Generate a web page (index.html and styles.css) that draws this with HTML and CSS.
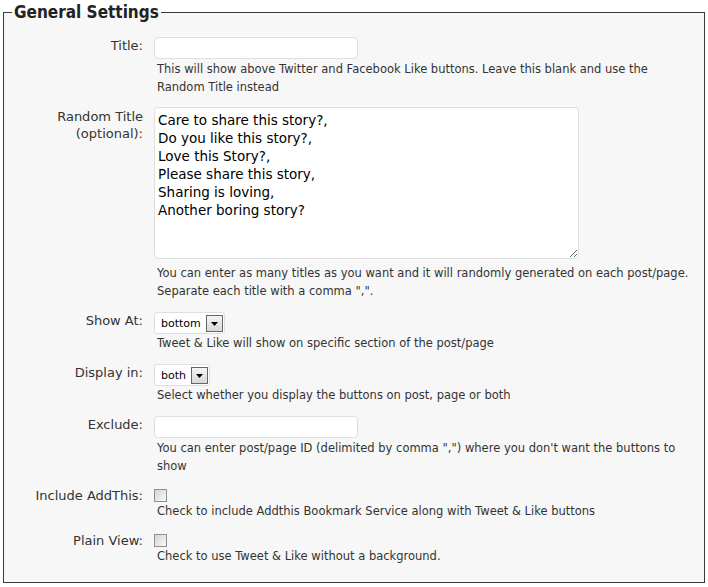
FILE: index.html
```html
<!DOCTYPE html>
<html>
<head>
<meta charset="utf-8">
<link rel="stylesheet" href="styles.css">
</head>
<body>
<fieldset class="settings">
  <legend class="settings-title">General Settings</legend>

  <div class="row">
    <label class="lbl">Title:</label>
    <div class="field">
      <input class="text" type="text">
      <p class="desc">This will show above Twitter and Facebook Like buttons. Leave this blank and use the Random Title instead</p>
    </div>
  </div>

  <div class="row">
    <label class="lbl">Random Title<br>(optional):</label>
    <div class="field">
      <textarea class="area">Care to share this story?,
Do you like this story?,
Love this Story?,
Please share this story,
Sharing is loving,
Another boring story?</textarea>
      <p class="desc">You can enter as many titles as you want and it will randomly generated on each post/page. Separate each title with a comma ",".</p>
    </div>
  </div>

  <div class="row">
    <label class="lbl">Show At:</label>
    <div class="field">
      <span class="select"><span class="select-value">bottom</span><span class="select-btn"><svg width="7" height="4" viewBox="0 0 7 4"><path d="M0 0h7L3.5 4z" fill="#000"/></svg></span></span>
      <p class="desc">Tweet &amp; Like will show on specific section of the post/page</p>
    </div>
  </div>

  <div class="row">
    <label class="lbl">Display in:</label>
    <div class="field">
      <span class="select"><span class="select-value">both</span><span class="select-btn"><svg width="7" height="4" viewBox="0 0 7 4"><path d="M0 0h7L3.5 4z" fill="#000"/></svg></span></span>
      <p class="desc">Select whether you display the buttons on post, page or both</p>
    </div>
  </div>

  <div class="row">
    <label class="lbl">Exclude:</label>
    <div class="field">
      <input class="text" type="text">
      <p class="desc">You can enter post/page ID (delimited by comma ",") where you don't want the buttons to show</p>
    </div>
  </div>

  <div class="row">
    <label class="lbl">Include AddThis:</label>
    <div class="field">
      <span class="check"></span>
      <p class="desc">Check to include Addthis Bookmark Service along with Tweet &amp; Like buttons</p>
    </div>
  </div>

  <div class="row row-last">
    <label class="lbl">Plain View:</label>
    <div class="field">
      <span class="check"></span>
      <p class="desc">Check to use Tweet &amp; Like without a background.</p>
    </div>
  </div>
</fieldset>
</body>
</html>
```

FILE: styles.css
```css
html, body {
  margin: 0;
  background: #ffffff;
}
body {
  padding: 2px 3px 0 3px;
  font-family: "DejaVu Sans", Verdana, sans-serif;
  color: #333;
}
.settings {
  margin: 0;
  border: 1px solid #3a3a3a;
  background: #f7f7f7;
  padding: 14px 12px 17px 8px;
  height: 581px;
  box-sizing: border-box;
}
.settings-title {
  padding: 0 2px;
  font-family: "DejaVu Sans Condensed", "DejaVu Sans", sans-serif;
  font-stretch: condensed;
  font-size: 17px;
  font-weight: bold;
  line-height: 20px;
  color: #222;
}
.row {
  display: grid;
  grid-template-columns: 131px 1fr;
  column-gap: 11px;
  margin-bottom: 11px;
}
.row-last { margin-bottom: 0; }
.lbl {
  text-align: right;
  font-size: 13px;
  line-height: 17px;
  padding-top: 1px;
  color: #333;
}
.field {
  display: flex;
  flex-direction: column;
  align-items: flex-start;
}
.text {
  display: block;
  width: 204px;
  height: 22px;
  box-sizing: border-box;
  border: 1px solid #dfdfdf;
  border-radius: 4px;
  background: #fff;
  margin: 1px 0 1px 0;
  padding: 2px 3px;
  font: 12px "DejaVu Sans", sans-serif;
}
.area {
  display: block;
  width: 425px;
  height: 152px;
  box-sizing: border-box;
  border: 1px solid #dfdfdf;
  border-radius: 4px;
  background: #fff;
  margin: 0 0 5px 0;
  padding: 3px 3px;
  font: 13.5px/18px "DejaVu Sans", sans-serif;
  color: #000;
  resize: both;
}
.desc {
  margin: 0;
  font-size: 11.5px;
  line-height: 18px;
  color: #333;
  padding-left: 3px;
}
.select {
  display: inline-flex;
  align-items: flex-start;
  height: 22px;
  box-sizing: border-box;
  border: 1px solid #dfdfdf;
  border-radius: 3px;
  background: #fff;
  padding: 2px 1px 0 6px;
  margin-top: 1px;
  font-size: 11px;
  line-height: 17px;
  color: #000;
}
.select-value { margin-right: 5px; }
.select-btn {
  display: flex;
  align-items: center;
  justify-content: center;
  width: 17px;
  height: 17px;
  box-sizing: border-box;
  border: 1px solid #666;
  background: linear-gradient(#f4f4f4, #d8d8d8);
}
.check {
  display: block;
  width: 13px;
  height: 13px;
  box-sizing: border-box;
  border: 1px solid #8f8f8f;
  background: linear-gradient(135deg, #d6d6d6, #f7f7f7);
  margin: 3px 0 0 0;
}
```
